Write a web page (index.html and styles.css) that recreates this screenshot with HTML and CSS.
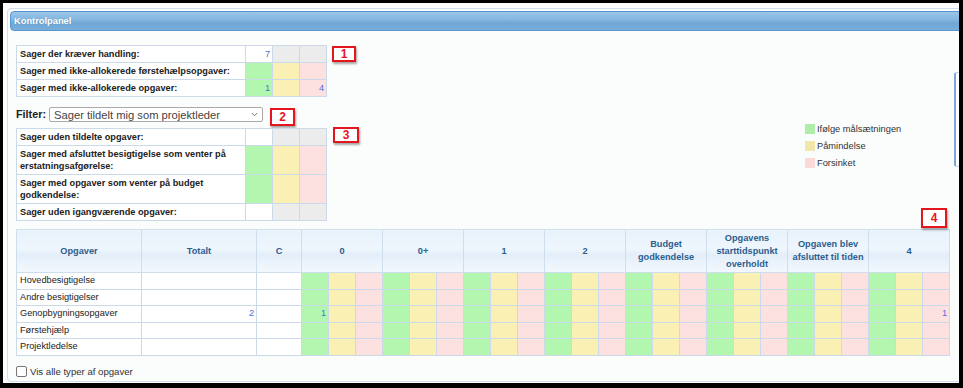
FILE: index.html
```html
<!DOCTYPE html>
<html>
<head>
<meta charset="utf-8">
<title>Kontrolpanel</title>
<link rel="stylesheet" href="styles.css">
</head>
<body>
<div class="screen">
  <div class="panel">
    <div class="titlebar">Kontrolpanel</div>
    <div class="content">
      <div class="top">
        <div class="left">
          <div class="row row1">
            <table class="sum">
              <colgroup><col class="c-lbl"><col class="c-cell"><col class="c-cell"><col class="c-cell"></colgroup>
              <tr><td class="lbl">Sager der kræver handling:</td><td class="num">7</td><td class="gray"></td><td class="gray"></td></tr>
              <tr><td class="lbl">Sager med ikke-allokerede førstehælpsopgaver:</td><td class="g"></td><td class="y"></td><td class="p"></td></tr>
              <tr><td class="lbl">Sager med ikke-allokerede opgaver:</td><td class="g num">1</td><td class="y"></td><td class="p num">4</td></tr>
            </table>
            <div class="tag t1">1</div>
          </div>
          <div class="row filter">
            <span class="flabel">Filter:</span>
            <div class="select"><span>Sager tildelt mig som projektleder</span><svg width="7" height="5" viewBox="0 0 7 5"><path d="M0.8 1 L3.5 3.8 L6.2 1" fill="none" stroke="#777" stroke-width="1"/></svg></div>
            <div class="tag t2">2</div>
          </div>
          <div class="row row3">
            <table class="sum">
              <colgroup><col class="c-lbl"><col class="c-cell"><col class="c-cell"><col class="c-cell"></colgroup>
              <tr><td class="lbl">Sager uden tildelte opgaver:</td><td></td><td class="gray"></td><td class="gray"></td></tr>
              <tr><td class="lbl">Sager med afsluttet besigtigelse som venter på erstatningsafgørelse:</td><td class="g"></td><td class="y"></td><td class="p"></td></tr>
              <tr><td class="lbl">Sager med opgaver som venter på budget godkendelse:</td><td class="g"></td><td class="y"></td><td class="p"></td></tr>
              <tr><td class="lbl">Sager uden igangværende opgaver:</td><td></td><td class="gray"></td><td class="gray"></td></tr>
            </table>
            <div class="tag t3">3</div>
          </div>
        </div>
        <ul class="legend">
          <li><span class="sw sw-g"></span>Ifølge målsætningen</li>
          <li><span class="sw sw-y"></span>Påmindelse</li>
          <li><span class="sw sw-p"></span>Forsinket</li>
        </ul>
      </div>

      <div class="grid-wrap">
        <div class="tag t4">4</div>
        <table class="grid">
          <colgroup>
            <col class="w-opg"><col class="w-tot"><col class="w-c">
            <col class="w-s"><col class="w-s"><col class="w-s">
            <col class="w-s"><col class="w-s"><col class="w-s">
            <col class="w-s"><col class="w-s"><col class="w-s">
            <col class="w-s"><col class="w-s"><col class="w-s">
            <col class="w-s"><col class="w-s"><col class="w-s">
            <col class="w-s"><col class="w-s"><col class="w-s">
            <col class="w-s"><col class="w-s"><col class="w-s">
            <col class="w-s"><col class="w-s"><col class="w-s">
          </colgroup>
          <thead>
            <tr>
              <th>Opgaver</th><th>Totalt</th><th>C</th>
              <th colspan="3">0</th><th colspan="3">0+</th><th colspan="3">1</th><th colspan="3">2</th>
              <th colspan="3">Budget godkendelse</th>
              <th colspan="3">Opgavens starttidspunkt overholdt</th>
              <th colspan="3">Opgaven blev afsluttet til tiden</th>
              <th colspan="3">4</th>
            </tr>
          </thead>
          <tbody>
            <tr><td class="name">Hovedbesigtigelse</td><td></td><td></td>
              <td class="g"></td><td class="y"></td><td class="p"></td><td class="g"></td><td class="y"></td><td class="p"></td><td class="g"></td><td class="y"></td><td class="p"></td><td class="g"></td><td class="y"></td><td class="p"></td><td class="g"></td><td class="y"></td><td class="p"></td><td class="g"></td><td class="y"></td><td class="p"></td><td class="g"></td><td class="y"></td><td class="p"></td><td class="g"></td><td class="y"></td><td class="p"></td></tr>
            <tr><td class="name">Andre besigtigelser</td><td></td><td></td>
              <td class="g"></td><td class="y"></td><td class="p"></td><td class="g"></td><td class="y"></td><td class="p"></td><td class="g"></td><td class="y"></td><td class="p"></td><td class="g"></td><td class="y"></td><td class="p"></td><td class="g"></td><td class="y"></td><td class="p"></td><td class="g"></td><td class="y"></td><td class="p"></td><td class="g"></td><td class="y"></td><td class="p"></td><td class="g"></td><td class="y"></td><td class="p"></td></tr>
            <tr><td class="name">Genopbygningsopgaver</td><td class="num">2</td><td></td>
              <td class="g num">1</td><td class="y"></td><td class="p"></td><td class="g"></td><td class="y"></td><td class="p"></td><td class="g"></td><td class="y"></td><td class="p"></td><td class="g"></td><td class="y"></td><td class="p"></td><td class="g"></td><td class="y"></td><td class="p"></td><td class="g"></td><td class="y"></td><td class="p"></td><td class="g"></td><td class="y"></td><td class="p"></td><td class="g"></td><td class="y"></td><td class="p num">1</td></tr>
            <tr><td class="name">Førstehjælp</td><td></td><td></td>
              <td class="g"></td><td class="y"></td><td class="p"></td><td class="g"></td><td class="y"></td><td class="p"></td><td class="g"></td><td class="y"></td><td class="p"></td><td class="g"></td><td class="y"></td><td class="p"></td><td class="g"></td><td class="y"></td><td class="p"></td><td class="g"></td><td class="y"></td><td class="p"></td><td class="g"></td><td class="y"></td><td class="p"></td><td class="g"></td><td class="y"></td><td class="p"></td></tr>
            <tr><td class="name">Projektledelse</td><td></td><td></td>
              <td class="g"></td><td class="y"></td><td class="p"></td><td class="g"></td><td class="y"></td><td class="p"></td><td class="g"></td><td class="y"></td><td class="p"></td><td class="g"></td><td class="y"></td><td class="p"></td><td class="g"></td><td class="y"></td><td class="p"></td><td class="g"></td><td class="y"></td><td class="p"></td><td class="g"></td><td class="y"></td><td class="p"></td><td class="g"></td><td class="y"></td><td class="p"></td></tr>
          </tbody>
        </table>
      </div>

      <label class="check"><span class="box"></span>Vis alle typer af opgaver</label>
    </div>
  </div>
  <div class="side-edge"></div>
</div>
</body>
</html>
```
FILE: styles.css
```css
* { box-sizing: border-box; }

html, body {
  margin: 0;
}

body {
  background: #000;
  padding: 3px 4px 5px 3px;
  width: 963px;
  height: 388px;
  overflow: hidden;
  font-family: "Liberation Sans", Arial, sans-serif;
  color: #222;
}

.screen {
  position: relative;
  height: 380px;
  background: #fbfcfc;
  overflow: hidden;
}

.panel {
  margin: 5px 0 0 4px;
  width: 1000px;
  height: 374px;
  border: 1px solid #cfdfed;
  border-radius: 4px;
  padding: 2px;
  background: #fbfcfc;
}

.titlebar {
  height: 20px;
  border: 1px solid #5a97cf;
  border-radius: 4px 0 0 4px;
  background: linear-gradient(#9ac5e7 0%, #86b8e0 40%, #6fa7d5 60%, #77aed9 100%);
  color: #fff;
  font-weight: bold;
  font-size: 9.3px;
  line-height: 18px;
  padding-left: 3px;
  text-shadow: 0 0 1px rgba(40, 90, 140, 0.4);
}

.content {
  padding: 14px 0 0 6px;
  width: 939px;
}

.top {
  display: flex;
  width: 933px;
}

.left {
  display: flex;
  flex-direction: column;
}

.row {
  display: flex;
  align-items: flex-start;
}

table {
  border-collapse: collapse;
  table-layout: fixed;
}

.sum {
  width: 310px;
  font-size: 9.2px;
}

.c-lbl { width: 229px; }
.c-cell { width: 27px; }

.sum td {
  border: 1px solid #cbdae8;
  padding: 2px 2px 2px 3px;
  line-height: 12px;
  background: #fff;
}

.sum td.lbl {
  font-weight: bold;
  color: #222;
}

td.num {
  text-align: right;
  color: #4a6fdc;
  padding-right: 2px;
}

td.gray { background: #ececec; }
td.g { background: #b3f6b0; }
td.y { background: #faf0b4; }
td.p { background: #fde1e1; }

.tag {
  width: 24px;
  height: 16px;
  border: 2px solid #e3161d;
  background: #fff;
  color: #e3161d;
  font-weight: bold;
  font-size: 12px;
  line-height: 12px;
  text-align: center;
  box-shadow: 1px 2px 2px rgba(0, 0, 0, 0.35);
}

.t1 { margin: 1px 0 0 5px; }

.filter {
  margin-top: 10px;
}

.flabel {
  font-weight: bold;
  font-size: 10.8px;
  line-height: 15px;
  margin-right: 3px;
}

.select {
  width: 214px;
  height: 15px;
  border: 1px solid #a9a9a9;
  border-radius: 2px;
  background: #fff;
  font-size: 11.2px;
  color: #444;
  padding: 0 4px;
  display: flex;
  align-items: center;
  justify-content: space-between;
}

.t2 {
  width: 25px;
  height: 18px;
  line-height: 14px;
  margin: 1px 0 0 7px;
}

.row3 { margin-top: 1px; }
.row3 .sum { margin-top: 1px; }
.t3 { width: 26px; margin-left: 6px; }

.legend {
  list-style: none;
  margin: 75px 0 0 auto;
  padding: 0;
  width: 144px;
  font-size: 9.3px;
  color: #333;
}

.legend li {
  display: flex;
  align-items: center;
  height: 17px;
}

.sw {
  width: 10px;
  height: 10px;
  margin-right: 2px;
}

.sw-g { background: #aeedaa; }
.sw-y { background: #f3e6aa; }
.sw-p { background: #fcd9d9; }

.grid-wrap {
  position: relative;
  margin-top: 8px;
  width: 933px;
}

.t4 {
  position: absolute;
  right: 2px;
  top: -21px;
  width: 26px;
  height: 20px;
  line-height: 16px;
}

.grid {
  width: 933px;
  font-size: 9.2px;
}

.w-opg { width: 125px; }
.w-tot { width: 115px; }
.w-c { width: 45px; }
.w-s { width: 27px; }

.grid th {
  border: 1px solid #cfdeec;
  height: 43px;
  padding: 1px 2px;
  line-height: 13px;
  font-weight: bold;
  color: #2d5e8e;
  text-align: center;
  vertical-align: middle;
  background: linear-gradient(#e8f2fc 0%, #eef6fd 45%, #e3eef9 58%, #f3f8fe 100%);
}

.grid td {
  border: 1px solid #cbdae8;
  padding: 2px 2px;
  line-height: 11.6px;
  background: #fff;
}

.grid td.g { background: #b3f6b0; }
.grid td.y { background: #faf0b4; }
.grid td.p { background: #fde1e1; }

.grid td.name {
  padding-left: 3px;
  color: #222;
}

.check {
  display: flex;
  align-items: center;
  margin-top: 10px;
  font-size: 9.6px;
  color: #333;
}

.box {
  width: 11px;
  height: 11px;
  border: 1px solid #767676;
  border-radius: 2px;
  background: #fff;
  margin-right: 3px;
}

.side-edge {
  position: absolute;
  left: 951px;
  top: 69px;
  width: 12px;
  height: 95px;
  border: 1px solid #c9d6e2;
  border-left: 2px solid #7aa6d8;
  border-radius: 3px 0 0 3px;
  background: #fff;
}
```
